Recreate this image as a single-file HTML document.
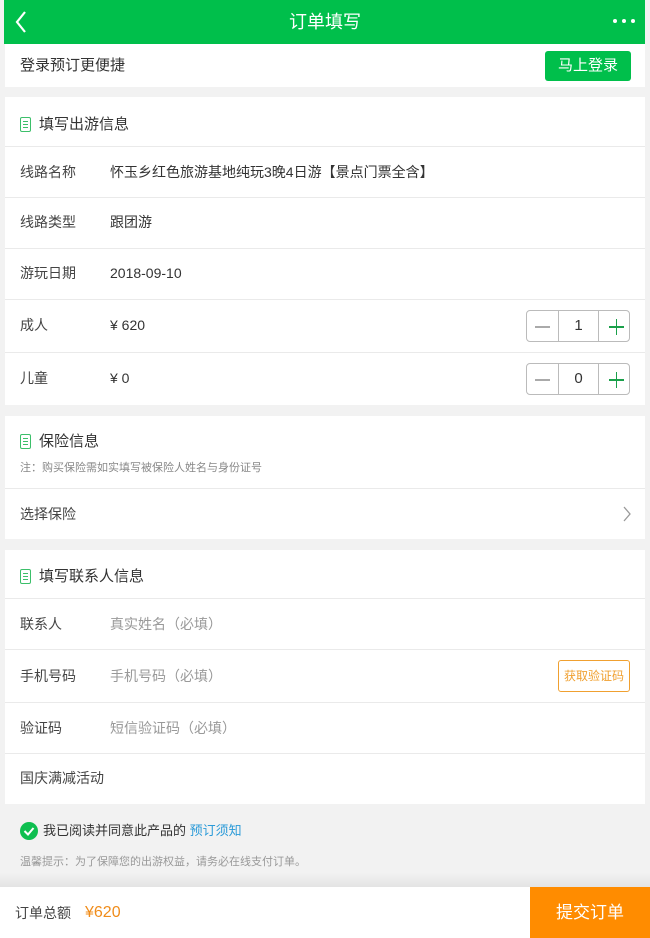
<!DOCTYPE html>
<html><head><meta charset="utf-8"><style>
*{margin:0;padding:0;box-sizing:border-box}
body{width:650px;height:938px;background:#f2f2f2;font-family:"Liberation Sans","Noto Sans CJK SC",sans-serif;position:relative;overflow:hidden;color:#333}
.a{position:absolute}
.w{position:absolute;left:5px;width:640px;background:#fff}
.t{position:absolute;font-size:14px;line-height:20px;white-space:nowrap}
.l{left:15px;color:#444}
.v{left:105px;color:#333}
.ph{left:105px;color:#999}
.hr{position:absolute;left:0;right:0;height:1px;background:#eaeaea}
.ic{position:absolute;left:15px;width:11px;height:15px;border:1.5px solid #3cbf6a;border-radius:2px}
.ic:before{content:"";position:absolute;left:2px;right:2px;top:3px;height:1px;background:#3cbf6a;box-shadow:0 3px 0 #3cbf6a,0 6px 0 #3cbf6a}
.h{font-size:15px;left:34px;color:#333}
.st{position:absolute;left:521px;width:104px;height:32px;border:1px solid #bbb;border-radius:4px}
.st .m{position:absolute;left:8px;top:15px;width:15px;height:1.5px;background:#aaa}
.st .n{position:absolute;left:31px;width:41px;top:0;height:30px;border-left:1px solid #bbb;border-right:1px solid #bbb;text-align:center;line-height:30px;font-size:15px;color:#333}
.st .p1{position:absolute;left:82px;top:15px;width:15px;height:1.5px;background:#1aa04a}
.st .p2{position:absolute;left:88.8px;top:8px;width:1.5px;height:16px;background:#1aa04a}
</style></head><body>
<div class="a" style="left:4px;top:0;width:641px;height:44px;background:#00bf4b"></div>
<svg class="a" style="left:14px;top:10px" width="14" height="24"><path d="M11 2 L3 12 L11 22" stroke="#fff" stroke-width="2.2" fill="none"/></svg>
<div class="t" style="left:0;width:650px;text-align:center;top:11px;font-size:18px;line-height:22px;color:#fff">订单填写</div>
<div class="a" style="left:613px;top:19px;width:4px;height:4px;border-radius:2px;background:#fff;box-shadow:9px 0 0 #fff,18px 0 0 #fff"></div>

<div class="w" style="top:44px;height:43px">
<div class="t" style="left:15px;top:12px;font-size:15px">登录预订更便捷</div>
<div class="a" style="left:540px;top:7px;width:86px;height:30px;background:#00bf4b;border-radius:3px;color:#fff;font-size:15px;text-align:center;line-height:30px">马上登录</div>
</div>

<div class="w" style="top:97px;height:308px">
<div class="ic" style="top:20px"></div><div class="t h" style="top:18px">填写出游信息</div>
<div class="hr" style="top:49px"></div>
<div class="t l" style="top:65px">线路名称</div><div class="t v" style="top:65px">怀玉乡红色旅游基地纯玩3晚4日游【景点门票全含】</div>
<div class="hr" style="top:100px"></div>
<div class="t l" style="top:115px">线路类型</div><div class="t v" style="top:115px">跟团游</div>
<div class="hr" style="top:151px"></div>
<div class="t l" style="top:166px">游玩日期</div><div class="t v" style="top:166px">2018-09-10</div>
<div class="hr" style="top:202px"></div>
<div class="t l" style="top:218px">成人</div><div class="t v" style="top:218px">¥ 620</div>
<div class="st" style="top:213px"><div class="m"></div><div class="n">1</div><div class="p1"></div><div class="p2"></div></div>
<div class="hr" style="top:255px"></div>
<div class="t l" style="top:271px">儿童</div><div class="t v" style="top:271px">¥ 0</div>
<div class="st" style="top:266px"><div class="m"></div><div class="n">0</div><div class="p1"></div><div class="p2"></div></div>
</div>

<div class="w" style="top:416px;height:123px">
<div class="ic" style="top:18px"></div><div class="t h" style="top:16px">保险信息</div>
<div class="t" style="left:15px;top:42px;font-size:11px;color:#888">注：购买保险需如实填写被保险人姓名与身份证号</div>
<div class="hr" style="top:72px"></div>
<div class="t l" style="top:88px">选择保险</div>
<svg class="a" style="left:617px;top:90px" width="10" height="16"><path d="M2 1 L8 8 L2 15" stroke="#999" stroke-width="1.3" fill="none"/></svg>
</div>

<div class="w" style="top:550px;height:254px">
<div class="ic" style="top:19px"></div><div class="t h" style="top:17px">填写联系人信息</div>
<div class="hr" style="top:48px"></div>
<div class="t l" style="top:64px">联系人</div><div class="t ph" style="top:64px">真实姓名（必填）</div>
<div class="hr" style="top:99px"></div>
<div class="t l" style="top:116px">手机号码</div><div class="t ph" style="top:116px">手机号码（必填）</div>
<div class="a" style="left:553px;top:110px;width:72px;height:32px;border:1px solid #f0a030;border-radius:3px;color:#f0a030;font-size:12px;text-align:center;line-height:30px">获取验证码</div>
<div class="hr" style="top:152px"></div>
<div class="t l" style="top:168px">验证码</div><div class="t ph" style="top:168px">短信验证码（必填）</div>
<div class="hr" style="top:203px"></div>
<div class="t l" style="top:218px">国庆满减活动</div>
</div>

<svg class="a" style="left:20px;top:822px" width="18" height="18"><circle cx="9" cy="9" r="9" fill="#0fbf50"/><path d="M4.5 9 L8 12.5 L13.5 6" stroke="#fff" stroke-width="2" fill="none"/></svg>
<div class="t" style="left:43px;top:821px;font-size:13px;color:#333">我已阅读并同意此产品的 <span style="color:#2a9ad8">预订须知</span></div>
<div class="t" style="left:20px;top:852px;font-size:11px;color:#999">温馨提示：为了保障您的出游权益，请务必在线支付订单。</div>

<div class="a" style="left:0;top:873px;width:650px;height:14px;background:linear-gradient(#f2f2f2,#e4e4e4)"></div>
<div class="a" style="left:0;top:887px;width:650px;height:51px;background:#fff"></div>
<div class="t" style="left:15px;top:903px;font-size:14px;color:#444">订单总额</div>
<div class="t" style="left:85px;top:903px;font-size:16px;color:#f08c1a">¥620</div>
<div class="a" style="left:530px;top:887px;width:120px;height:51px;background:#ff8c00;color:#fff;font-size:17px;text-align:center;line-height:51px">提交订单</div>
</body></html>
